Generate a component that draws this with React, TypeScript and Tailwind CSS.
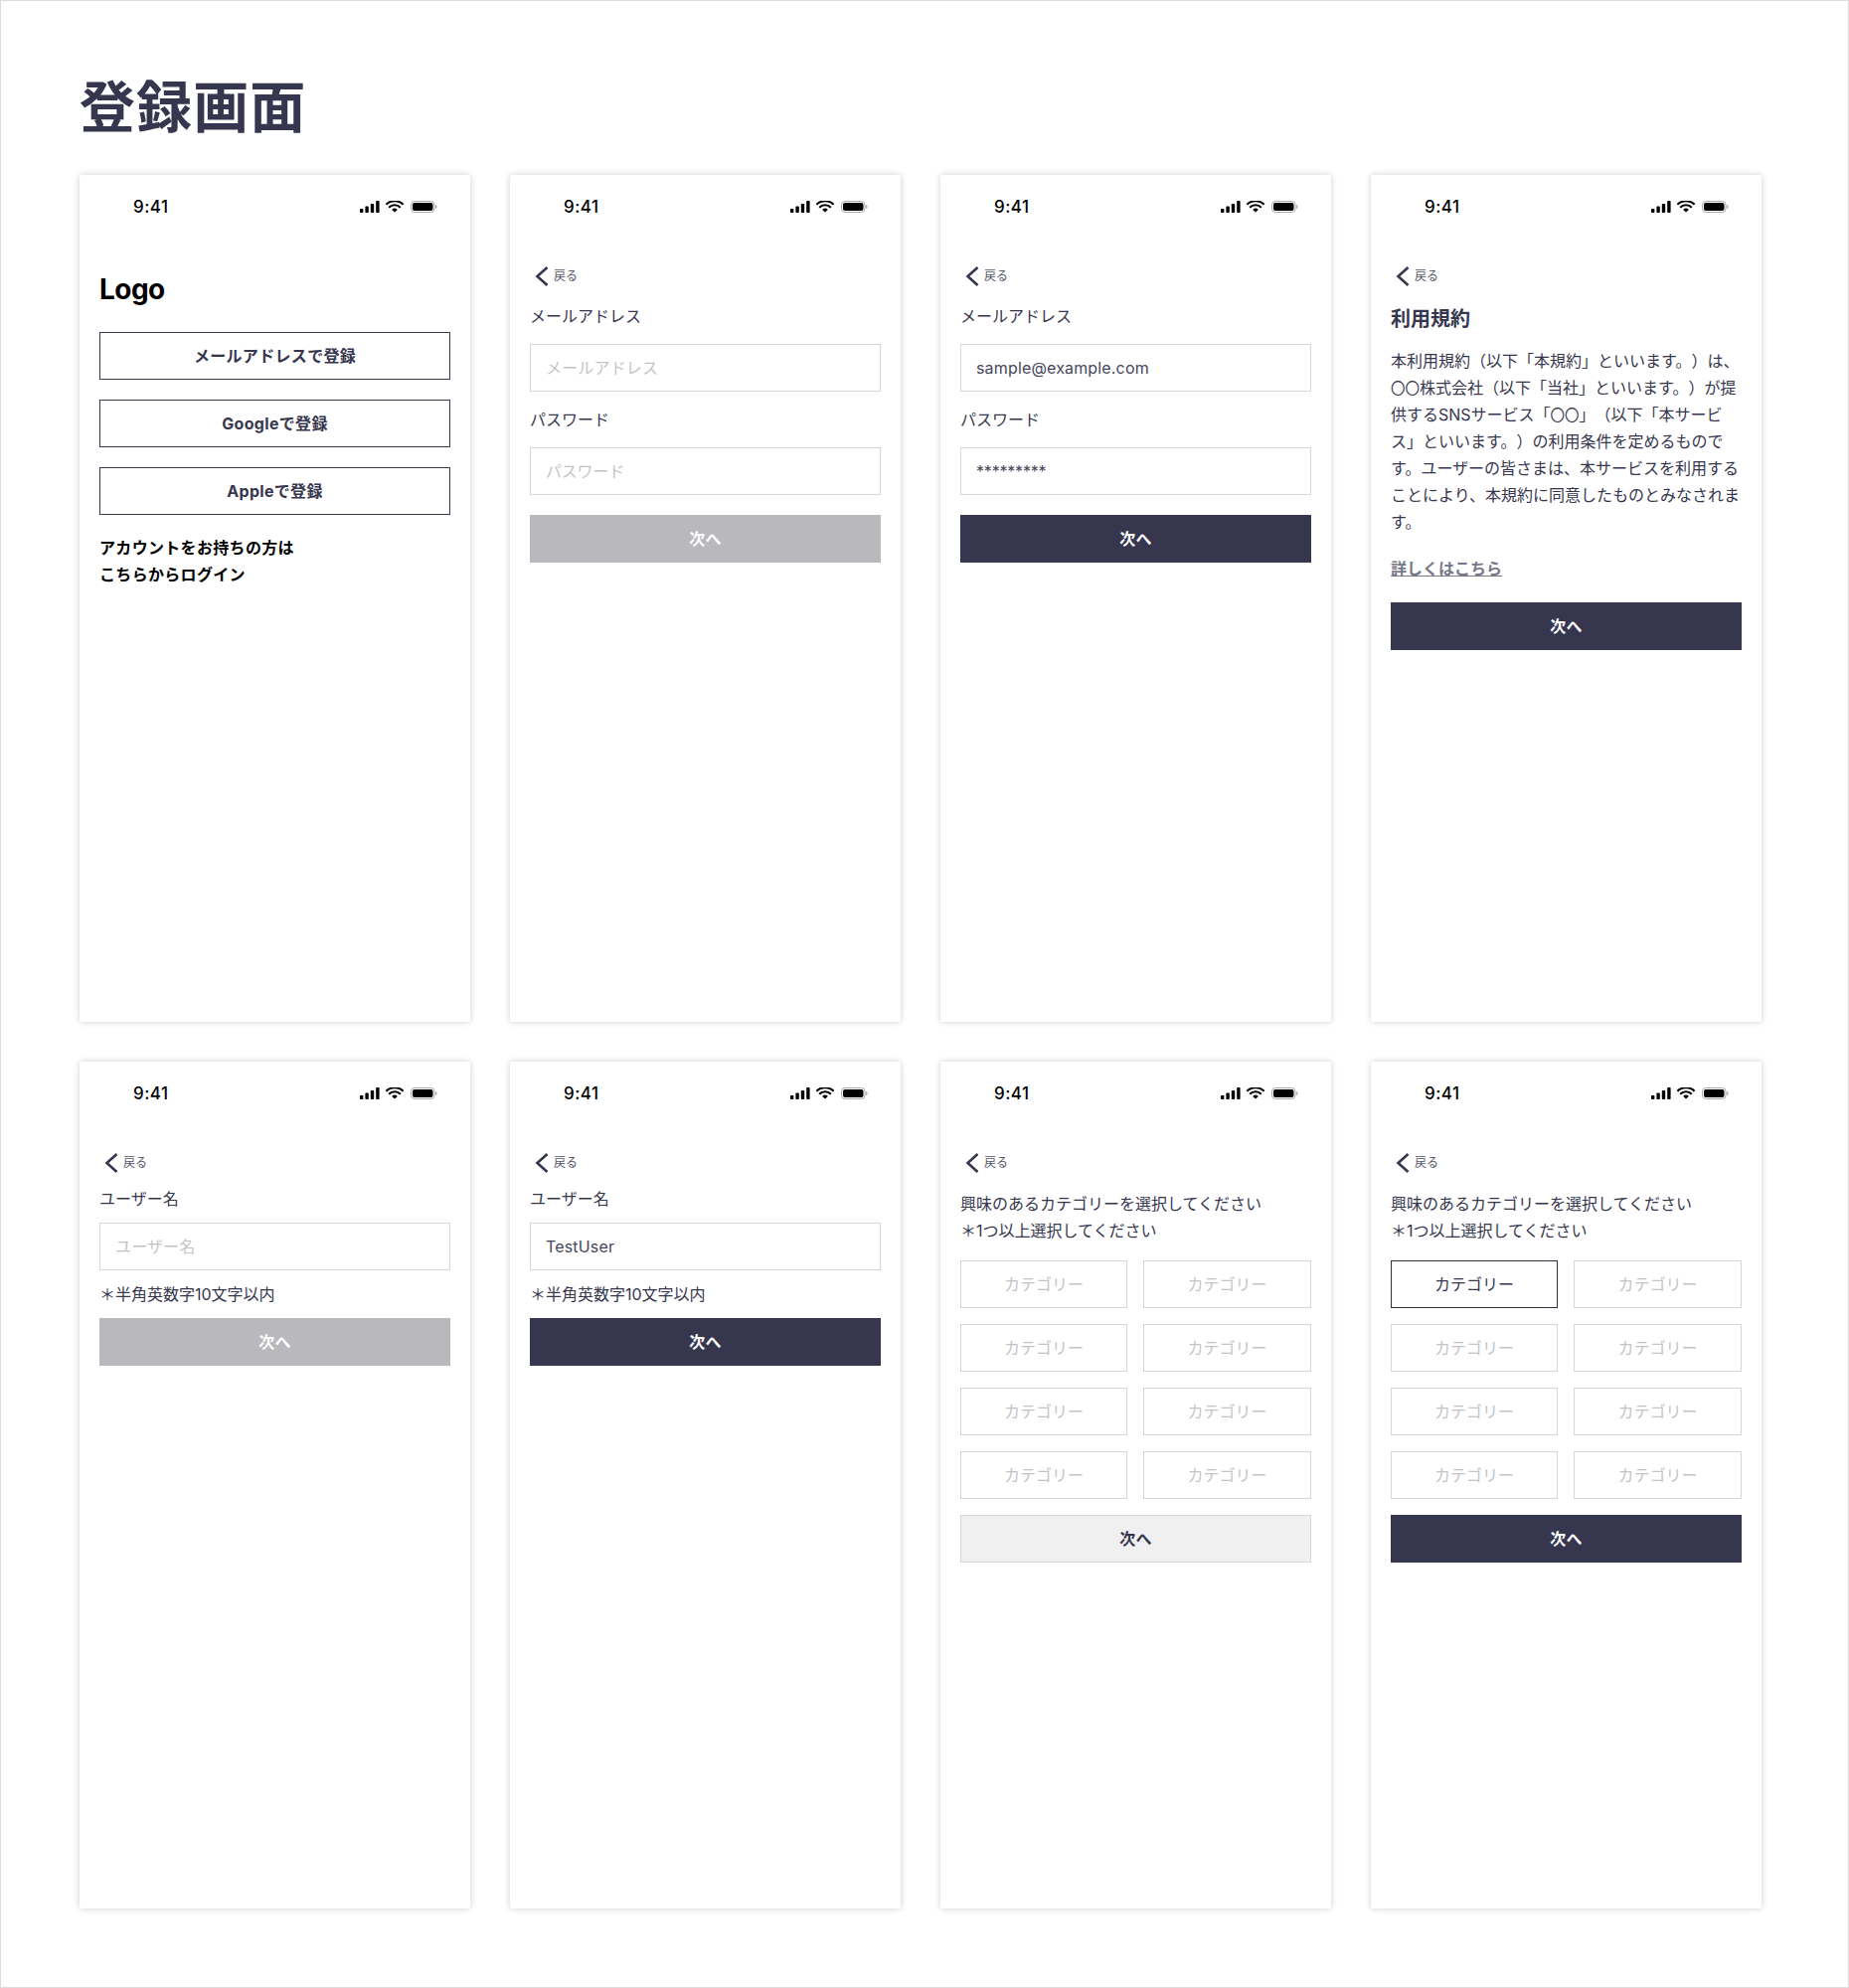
const FONT = "font-['Inter','Noto_Sans_CJK_JP',sans-serif] [text-spacing-trim:space-all]";

function StatusBar() {
  return (
    <div className="h-[64px] flex items-center justify-between pl-[54px] pr-[33px]">
      <span className="text-[17px] font-medium leading-[22px] text-black tracking-[0.5px]">9:41</span>
      <svg width="78" height="12" viewBox="0 0 78 12" aria-hidden="true">
        <rect x="0" y="8" width="3.4" height="4" rx="0.8" fill="#000" />
        <rect x="5.4" y="5.6" width="3.4" height="6.4" rx="0.8" fill="#000" />
        <rect x="10.8" y="3" width="3.4" height="9" rx="0.8" fill="#000" />
        <rect x="16.2" y="0" width="3.4" height="12" rx="0.8" fill="#000" />
        <path d="M26.4 3.8 A12 12 0 0 1 43.6 3.8" stroke="#000" strokeWidth="2.1" fill="none" />
        <path d="M29.2 6.7 A8 8 0 0 1 40.8 6.7" stroke="#000" strokeWidth="2.1" fill="none" />
        <path d="M35 11.6 L32.2 8.9 A4 4 0 0 1 37.8 8.9 Z" fill="#000" />
        <rect x="51.5" y="0.5" width="23.5" height="11" rx="3.4" fill="none" stroke="#a8a8a8" />
        <rect x="53" y="2" width="20.5" height="8" rx="2" fill="#000" />
        <path d="M76 4 C77.2 4.4 77.6 5.2 77.6 6 C77.6 6.8 77.2 7.6 76 8 Z" fill="#b0b0b0" />
      </svg>
    </div>
  );
}

function Back() {
  return (
    <div className="mt-[26px] h-[24px] flex items-center gap-[5px]">
      <svg width="14" height="20" viewBox="0 0 14 20" className="ml-[5px]" aria-hidden="true">
        <path d="M12.5 1 L2.5 10 L12.5 19" fill="none" stroke="#36364e" strokeWidth="2.6" />
      </svg>
      <span className="text-[12px] leading-[16px] text-[#55556a]">戻る</span>
    </div>
  );
}

function Label({ children, className = "" }: { children: React.ReactNode; className?: string }) {
  return <div className={`text-[16px] leading-[27px] text-[#36364e] ${className}`}>{children}</div>;
}

function Field({ placeholder, value, className = "" }: { placeholder: string; value?: string; className?: string }) {
  return (
    <input
      readOnly
      placeholder={placeholder}
      value={value ?? ""}
      className={`block w-full h-[48px] px-[15px] border border-[#d6d6d6] bg-white text-[16px] text-[#46465a] placeholder:text-[#c4c4c8] outline-none ${className}`}
    />
  );
}

function Next({ variant, className = "" }: { variant: "dark" | "off" | "light"; className?: string }) {
  const look =
    variant === "dark"
      ? "bg-[#36364e] text-white"
      : variant === "off"
        ? "bg-[#b8b8bd] text-white"
        : "bg-[#f0f0f1] text-[#36364e] border border-[#d6d6d6]";
  return (
    <div className={`h-[48px] flex items-center justify-center text-[16px] font-bold tracking-[0.02em] ${look} ${className}`}>次へ</div>
  );
}

function Card({ children }: { children: React.ReactNode }) {
  return (
    <div className="h-[852px] bg-white rounded-[2px] shadow-[0_0_6px_rgba(0,0,0,0.2)] overflow-hidden">
      <StatusBar />
      {children}
    </div>
  );
}

function Outline({ children, className = "" }: { children: React.ReactNode; className?: string }) {
  return (
    <div className={`h-[48px] flex items-center justify-center border border-[#36364e] text-[16px] font-bold tracking-[0.02em] text-[#36364e] ${className}`}>
      {children}
    </div>
  );
}

function Cat({ on }: { on?: boolean }) {
  return (
    <div
      className={
        on
          ? "h-[48px] flex items-center justify-center border border-[#333340] text-[16px] text-[#36364e]"
          : "h-[48px] flex items-center justify-center border border-[#d6d6d6] text-[16px] text-[#c4c4c8]"
      }
    >
      カテゴリー
    </div>
  );
}

function Categories({ first, next }: { first?: boolean; next: "dark" | "light" }) {
  return (
    <div className="px-5">
      <Back />
      <div className="mt-[16px] text-[16px] leading-[27px] text-[#36364e]">
        興味のあるカテゴリーを選択してください
        <br />
        ＊1つ以上選択してください
      </div>
      <div className="mt-[16px] grid grid-cols-[168px_169px] gap-x-4 gap-y-4">
        <Cat on={first} />
        <Cat />
        <Cat />
        <Cat />
        <Cat />
        <Cat />
        <Cat />
        <Cat />
      </div>
      <Next variant={next} className="mt-[16px]" />
    </div>
  );
}

function Credentials({ email, password, next }: { email?: string; password?: string; next: "dark" | "off" }) {
  return (
    <div className="px-5">
      <Back />
      <Label className="mt-[15px]">メールアドレス</Label>
      <Field className="mt-[14px] tracking-[0.01em]" placeholder="メールアドレス" value={email} />
      <Label className="mt-[15px]">パスワード</Label>
      <Field className="mt-[14px] tracking-[-0.2px]" placeholder="パスワード" value={password} />
      <Next variant={next} className="mt-[20px]" />
    </div>
  );
}

function UserName({ value, next }: { value?: string; next: "dark" | "off" }) {
  return (
    <div className="px-5">
      <Back />
      <Label className="mt-[11px]">ユーザー名</Label>
      <Field className="mt-[10px] tracking-[0.01em]" placeholder="ユーザー名" value={value} />
      <Label className="mt-[11px]">＊半角英数字10文字以内</Label>
      <Next variant={next} className="mt-[10px]" />
    </div>
  );
}

function Maru() {
  return <span className="text-[14.5px]">〇〇</span>;
}

export default function App() {
  return (
    <div className={`h-[2000px] w-[1860px] bg-white border border-[#dcdcdc] pl-[79px] ${FONT}`}>
      <h1 className="pt-[75px] text-[56px] leading-[64px] font-bold tracking-[0.02em] text-[#36364e]">登録画面</h1>
      <div className="mt-[36px] grid grid-cols-[repeat(4,393px)] gap-x-[40px] gap-y-[40px]">
        <Card>
          <div className="px-5">
            <div className="mt-[33px] text-[28px] leading-[36px] font-bold tracking-[-0.02em] text-black">Logo</div>
            <Outline className="mt-[25px]">メールアドレスで登録</Outline>
            <Outline className="mt-[20px]">Googleで登録</Outline>
            <Outline className="mt-[20px]">Appleで登録</Outline>
            <div className="mt-[20px] text-[16px] leading-[27px] font-bold tracking-[0.02em] text-black">
              アカウントをお持ちの方は
              <br />
              こちらからログイン
            </div>
          </div>
        </Card>
        <Card>
          <Credentials next="off" />
        </Card>
        <Card>
          <Credentials email="sample@example.com" password="*********" next="dark" />
        </Card>
        <Card>
          <div className="px-5">
            <Back />
            <div className="mt-[16px] text-[20px] leading-[30px] font-bold text-[#36364e]">利用規約</div>
            <div className="mt-[14px] text-[16px] leading-[27px] text-[#36364e]">
              本利用規約（以下「本規約」といいます。）は、
              <br />
              <Maru />株式会社（以下「当社」といいます。）が提
              <br />
              供するSNSサービス「<Maru />」（以下「本サービ
              <br />
              ス」といいます。）の利用条件を定めるもので
              <br />
              す。ユーザーの皆さまは、本サービスを利用する
              <br />
              ことにより、本規約に同意したものとみなされま
              <br />
              す。
            </div>
            <div className="mt-[20px] text-[16px] leading-[27px] font-bold text-[#77778a] underline">詳しくはこちら</div>
            <Next variant="dark" className="mt-[20px]" />
          </div>
        </Card>
        <Card>
          <UserName next="off" />
        </Card>
        <Card>
          <UserName value="TestUser" next="dark" />
        </Card>
        <Card>
          <Categories next="light" />
        </Card>
        <Card>
          <Categories first next="dark" />
        </Card>
      </div>
    </div>
  );
}
